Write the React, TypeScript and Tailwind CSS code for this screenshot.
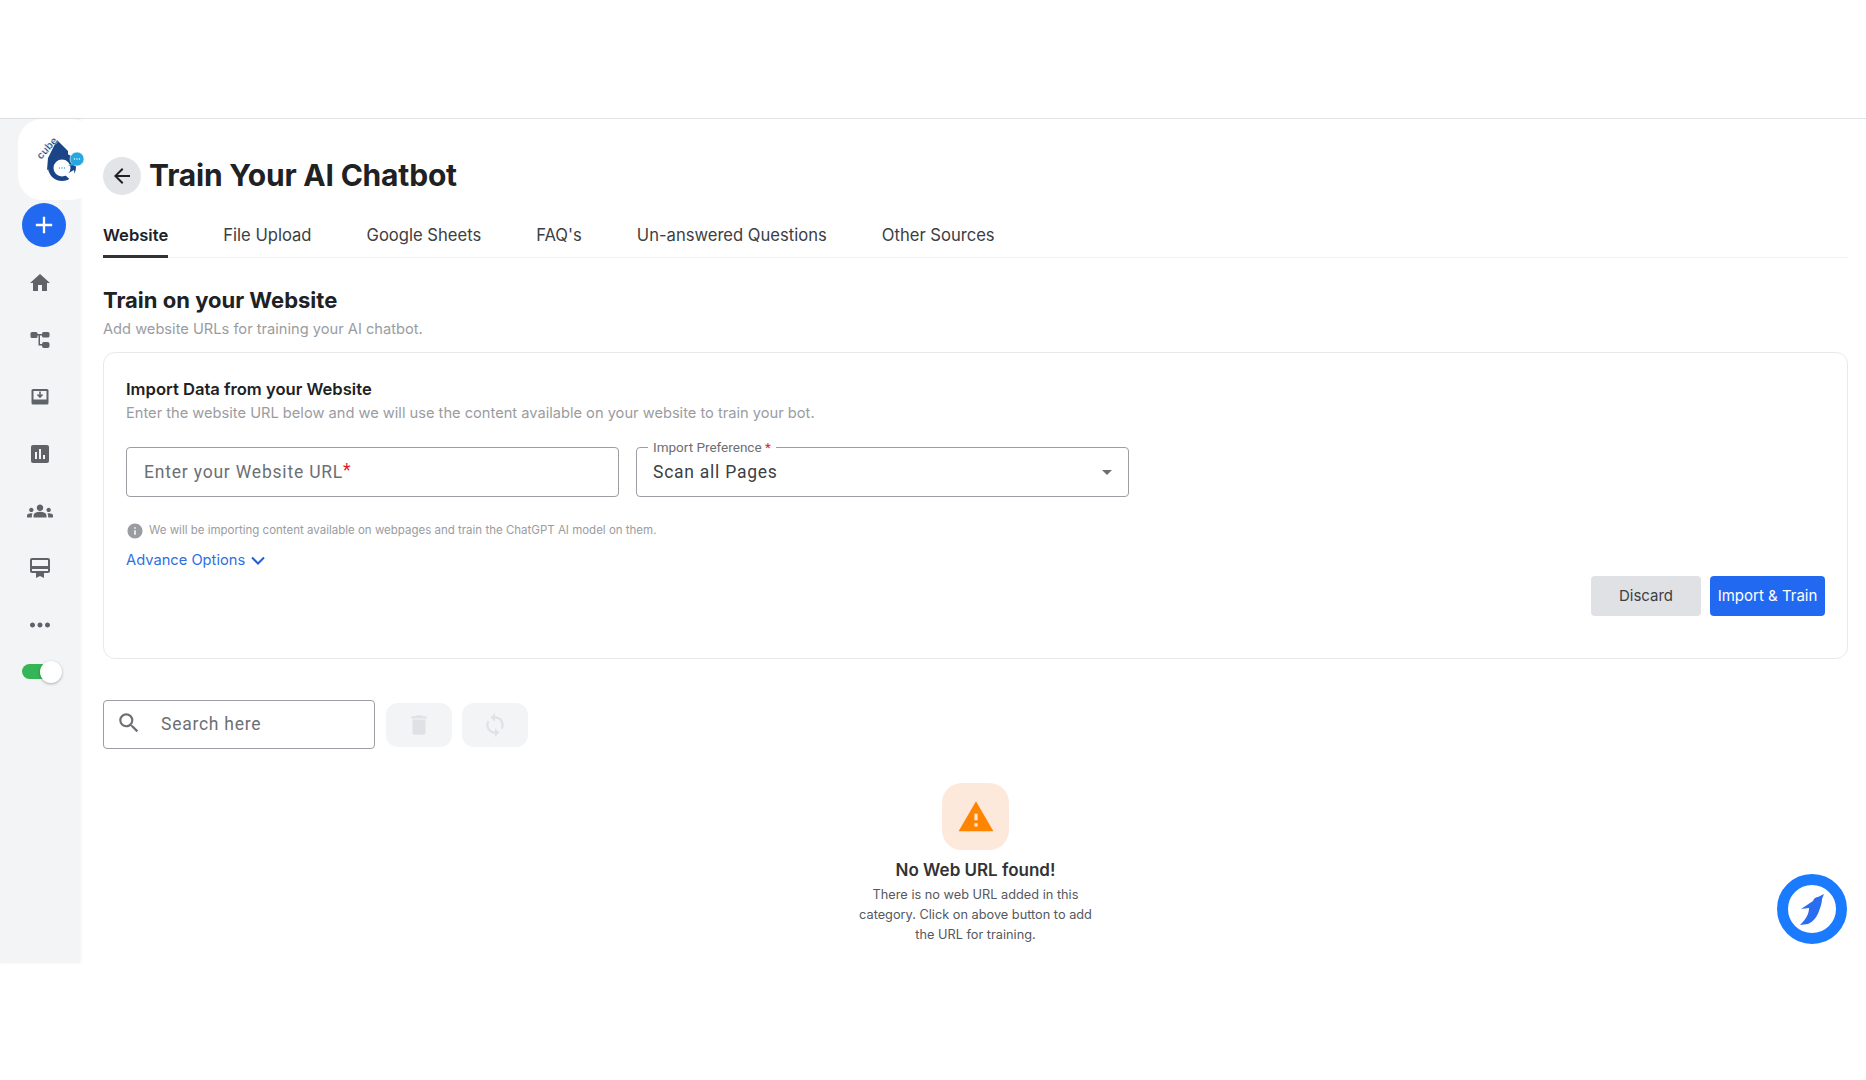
import { MdAdd, MdArrowBack, MdAssessment, MdCardMembership, MdDelete, MdGroups, MdHome, MdInfo, MdMoreHoriz, MdSearch, MdSync, MdWarning } from 'react-icons/md'

const sans = 'font-["Inter",sans-serif]'
const tabs = ['File Upload', 'Google Sheets', "FAQ's", 'Un-answered Questions', 'Other Sources']

function CubeLogo() {
  return (
    <svg viewBox="32 133 54 54" className="h-[54px] w-[54px]">
      <polygon points="57,140 68,151 68,157 47,170 48,158" fill="#1c4587" />
      <circle cx="62" cy="167" r="14" fill="#1c4587" />
      <text x="41" y="160" transform="rotate(-48 41 160)" fontSize="10.500" fontWeight="700" fontFamily="Inter, sans-serif" fill="#1c4587" stroke="#fff" strokeWidth="0.300">cube</text>
      <circle cx="62" cy="168" r="8.500" fill="#fff" />
      <path d="M65 175l11 10-2-15z" fill="#fff" />
      <circle cx="77" cy="159" r="7" fill="#27a7e0" stroke="#fff" strokeWidth="0.600" />
      <path d="M72 163l-4 3 7-1z" fill="#27a7e0" />
      <circle cx="74.500" cy="159" r="0.700" fill="#fff" />
      <circle cx="77" cy="159" r="0.700" fill="#fff" />
      <circle cx="79.500" cy="159" r="0.700" fill="#fff" />
      <circle cx="59.500" cy="168" r="0.700" fill="#27a7e0" />
      <circle cx="62" cy="168" r="0.700" fill="#27a7e0" />
      <circle cx="64.500" cy="168" r="0.700" fill="#27a7e0" />
    </svg>
  )
}

function FlowIcon() {
  return (
    <svg viewBox="0 0 20 20" className="h-5 w-5" fill="#5f6368">
      <rect x="0.500" y="2" width="7" height="6" rx="1.500" />
      <rect x="12" y="2" width="7.500" height="5.500" rx="1.500" />
      <rect x="12" y="12" width="7.500" height="6" rx="2" />
      <path d="M7 4h6v1.500H10V14h3v1.500H8.500V5.500H7z" />
    </svg>
  )
}

function TrayIcon() {
  return (
    <svg viewBox="0 0 20 20" className="h-5 w-5" fill="none">
      <rect x="1.500" y="2" width="17" height="15.500" rx="1.500" fill="#5f6368" />
      <rect x="3.500" y="4" width="13" height="8.500" fill="#f3f4f6" />
      <path d="M10 4.500v5M7.500 7.500L10 10l2.500-2.500" stroke="#5f6368" strokeWidth="1.600" />
    </svg>
  )
}

function Penguin() {
  return (
    <svg viewBox="0 0 24 32" className="h-8 w-6">
      <path d="M24 1l-6 3c-2 0-4 1-5 4L1 16l8-1c0 6-3 11-9 17l8-1c5-2 9-7 11-13 2-5 3-9 3-12z" fill="#2a6df0" />
    </svg>
  )
}

function Chevron() {
  return (
    <svg viewBox="0 0 14 9" className="h-[9px] w-[14px]" fill="none" stroke="#1f5fd6" strokeWidth="2">
      <path d="M1 1.500l6 6 6-6" />
    </svg>
  )
}

function SideIcon({ children }: { children: React.ReactNode }) {
  return <div className="flex h-[57px] w-20 items-center justify-center text-[#5f6368]">{children}</div>
}

export default function App() {
  return (
    <div className={`h-[1080px] overflow-hidden bg-white ${sans}`}>
      <div className="h-[119px] border-b border-[#e1e3e6]" />
      <div className="flex h-[844px]">
        <aside className="flex w-20 shrink-0 flex-col bg-[#f3f4f6] shadow-[1px_0_3px_rgba(0,0,0,0.06)]">
          <div className="ml-[18px] h-[81px] w-[77px] shrink-0 rounded-[24px] bg-white pt-[14px] pl-[14px]">
            <CubeLogo />
          </div>
          <div className="mt-[3px] ml-[22px] flex h-11 w-11 shrink-0 items-center justify-center rounded-full bg-[#2269f2] text-white">
            <MdAdd size={28} />
          </div>
          <div className="mt-[7px] flex flex-col">
            <SideIcon><MdHome size={24} /></SideIcon>
            <SideIcon><FlowIcon /></SideIcon>
            <SideIcon><TrayIcon /></SideIcon>
            <SideIcon><MdAssessment size={24} /></SideIcon>
            <SideIcon><MdGroups size={26} /></SideIcon>
            <SideIcon><MdCardMembership size={24} /></SideIcon>
            <SideIcon><MdMoreHoriz size={30} /></SideIcon>
          </div>
          <div className="mt-[11px] ml-[22px] flex h-[15px] w-[32px] items-center rounded-full bg-[#34b556]">
            <div className="ml-[18px] h-[22px] w-[22px] shrink-0 rounded-full bg-white shadow-[0_1px_3px_rgba(0,0,0,0.3)]" />
          </div>
        </aside>

        <main className="min-w-0 flex-1 pt-[34px] pr-[18px] pl-[23px]">
          <div className="flex items-center gap-[8px]">
            <div className="flex h-[38px] w-[38px] items-center justify-center rounded-full bg-[#e2e4e8] text-[#202124]">
              <MdArrowBack size={24} />
            </div>
            <h1 className="text-[30px] font-bold tracking-[-0.2px] text-[#202124]">Train Your AI Chatbot</h1>
          </div>

          <div className="mt-[15px] flex h-[45px] gap-[55px] border-b border-[#f1f1f3] text-[16.600px] text-[#3c4043]">
            <div className="h-[45px] border-b-[3px] border-[#333] pt-[10px] font-semibold text-[#202124]">Website</div>
            {tabs.map((t) => (
              <div key={t} className="pt-[10px]">{t}</div>
            ))}
          </div>

          <h2 className="mt-[27px] text-[22px] font-bold leading-[30px] text-[#202124]">Train on your Website</h2>
          <p className="mt-[4px] text-[14.650px] leading-5 text-[#9a9ca1]">Add website URLs for training your AI chatbot.</p>

          <section className="mt-[13px] h-[307px] rounded-xl border border-[#e8e9eb] px-[22px] pt-[24px]">
            <h3 className="text-[16.600px] font-semibold leading-[24px] text-[#202124]">Import Data from your Website</h3>
            <p className="text-[14.650px] leading-[24px] text-[#9a9ca1]">Enter the website URL below and we will use the content available on your website to train your bot.</p>

            <div className='mt-[22px] flex gap-[17px] font-["Roboto",sans-serif]'>
              <div className="flex h-[50px] w-[493px] items-center rounded border border-[#9b9ea3] pl-[17px] text-[17.500px] tracking-[0.8px] text-[#6c6f74]">
                Enter your Website URL<span className="-mt-1 text-[#e01b24]">*</span>
              </div>
              <div className="relative flex h-[50px] w-[493px] items-center rounded border border-[#9b9ea3] pr-[16px] pl-[16px] text-[17.500px] tracking-[0.75px] text-[#3c4043]">
                <span className="absolute -top-[9px] left-[11px] bg-white px-[5px] text-[13.500px] leading-4 tracking-normal text-[#6c6f74]">
                  Import Preference <span className="text-[#e01b24]">*</span>
                </span>
                <span className="flex-1">Scan all Pages</span>
                <span className="h-0 w-0 border-x-[5px] border-t-[5px] border-x-transparent border-t-[#6c6f74]" />
              </div>
            </div>

            <div className="mt-[25px] flex items-center gap-[5px] text-[11.500px] text-[#9a9ca1]">
              <MdInfo size={18} />
              We will be importing content available on webpages and train the ChatGPT AI model on them.
            </div>
            <div className="mt-[9px] flex h-[22px] items-center gap-[6px] text-[14.700px] leading-5 text-[#2f6fe0]">
              Advance Options <Chevron />
            </div>

            <div className="mt-[5px] flex justify-end gap-[9px] text-[15px]">
              <button className="h-[40px] w-[110px] rounded bg-[#dfe1e5] text-[#3c4043]">Discard</button>
              <button className="h-[40px] w-[115px] rounded bg-[#2269f2] text-white">Import &amp; Train</button>
            </div>
          </section>

          <div className="mt-[41px] flex items-center">
            <div className='flex h-[49px] w-[272px] items-center rounded border border-[#9b9ea3] pl-[12px] font-["Roboto",sans-serif] text-[17.500px] tracking-[0.75px] text-[#6c6f74]'>
              <MdSearch size={26} className="-mt-[4px]" />
              <span className="ml-[19px]">Search here</span>
            </div>
            <div className="ml-[11px] flex h-11 w-[66px] items-center justify-center rounded-xl bg-[#f3f4f6] text-[#dfe1e5]"><MdDelete size={26} /></div>
            <div className="ml-[10px] flex h-11 w-[66px] items-center justify-center rounded-xl bg-[#f3f4f6] text-[#dfe1e5]"><MdSync size={26} /></div>
          </div>

          <div className="mt-[34px] flex flex-col items-center">
            <div className="flex h-[67px] w-[67px] items-center justify-center rounded-[20px] bg-[#fde8dc] text-[#ff8500]">
              <MdWarning size={38} />
            </div>
            <h4 className="mt-[8px] text-[17px] font-semibold leading-[24px] text-[#333]">No Web URL found!</h4>
            <p className="mt-[3px] w-[240px] text-center text-[12.750px] leading-[20px] text-[#55585d]">
              There is no web URL added in this category. Click on above button to add the URL for training.
            </p>
          </div>
        </main>
      </div>

      <div className="fixed top-[874px] left-[1777px] flex h-[70px] w-[70px] items-center justify-center rounded-full border-[11px] border-[#1a7bff] bg-white">
        <Penguin />
      </div>
    </div>
  )
}
